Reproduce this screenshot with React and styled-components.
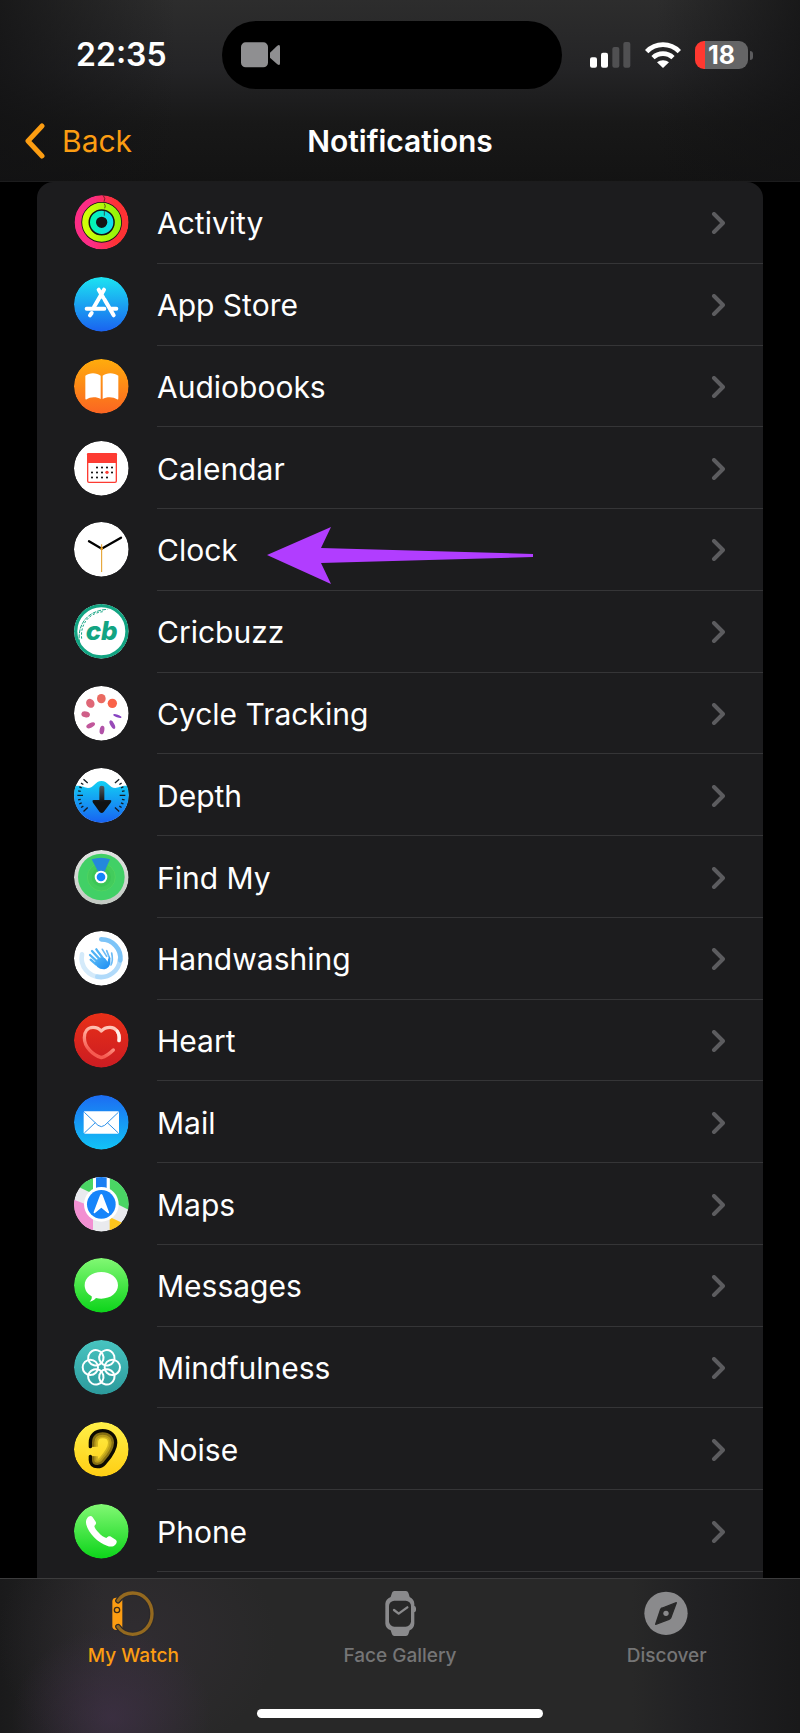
import React from "react";
import styled, { createGlobalStyle } from "styled-components";

const GlobalStyle = createGlobalStyle`
  *, *::before, *::after { box-sizing: border-box; }
  body { margin: 0; background: #000; }
`;

const Screen = styled.div`
  display: flex;
  flex-direction: column;
  min-height: 100vh;
  background: #000;
  color: #fff;
  font-family: Inter, "Liberation Sans", sans-serif;
`;

const Header = styled.header`
  background:
    linear-gradient(90deg, rgba(18, 18, 19, 0.75), transparent 22%, transparent 82%, rgba(18, 18, 19, 0.75)),
    linear-gradient(#2d2d2d, #242426 38%, #181818 68%, #131313);
  border-bottom: 1px solid #1c1c1d;
`;

const StatusBar = styled.div`
  display: grid;
  grid-template-columns: 146fr 340px 190fr;
  align-items: center;
  padding: 21px 47px 0 76px;
`;

const Time = styled.time`
  font-size: 32px;
  line-height: 36px;
  font-weight: 600;
`;

const Island = styled.div`
  height: 68px;
  border-radius: 34px;
  background: #000;
  display: flex;
  align-items: center;
  padding-left: 19px;
`;

const StatusIcons = styled.div`
  display: flex;
  align-items: center;
  justify-content: flex-end;
  gap: 14px;
`;

const Battery = styled.div`
  display: flex;
  align-items: center;
  gap: 2px;
  &::after {
    content: "";
    width: 3px;
    height: 9px;
    border-radius: 0 4px 4px 0;
    background: #5c5c5e;
  }
`;

const BatteryBody = styled.div`
  width: 53px;
  height: 28px;
  border-radius: 9px;
  background: linear-gradient(90deg, #ff3830 10px, #656566 10px);
  font-size: 25px;
  line-height: 28px;
  font-weight: 700;
  text-align: center;
`;

const NavBar = styled.nav`
  display: grid;
  grid-template-columns: 1fr auto 1fr;
  align-items: center;
  height: 92px;
  padding: 12px 24px 0;
`;

const BackButton = styled.button`
  justify-self: start;
  display: flex;
  align-items: center;
  gap: 16px;
  padding: 0;
  border: 0;
  background: none;
  color: #fc9d12;
  font: inherit;
  font-size: 30px;
  line-height: 36px;
`;

const Title = styled.h1`
  margin: 0;
  font-size: 30px;
  line-height: 36px;
  font-weight: 600;
`;

const Main = styled.main`
  flex: 1;
  display: flex;
  padding: 0 37px;
`;

const AppList = styled.ul`
  flex: 1;
  display: flex;
  flex-direction: column;
  margin: 0;
  padding: 0 0 6px;
  list-style: none;
  background: #1c1c1e;
  border-radius: 16px 16px 0 0;
`;

const Item = styled.li`
  flex: 1 0 80px;
  display: flex;
  position: relative;
`;

const RowLink = styled.a`
  flex: 1;
  display: flex;
  align-items: center;
  gap: 28px;
  padding-left: 37px;
  color: #fff;
  text-decoration: none;
`;

const RowBody = styled.span`
  flex: 1;
  align-self: stretch;
  display: flex;
  align-items: center;
  justify-content: space-between;
  padding: 2px 38px 0 0;
  border-bottom: 1px solid #353537;
  font-size: 30px;
  line-height: 36px;
`;

const Pointer = styled.svg`
  position: absolute;
  left: 230px;
  top: 18px;
`;

const TabBar = styled.nav`
  display: flex;
  flex-direction: column;
  align-items: center;
  justify-content: space-between;
  height: 155px;
  padding-bottom: 15px;
  border-top: 1px solid #3c3c3d;
  background:
    radial-gradient(ellipse 100px 90px at 14% 90%, rgba(68, 50, 78, 0.6), transparent),
    radial-gradient(ellipse 140px 120px at 17% 40%, rgba(58, 50, 60, 0.45), transparent),
    linear-gradient(90deg, #1a1a1b, #282828 13%, #282828 79%, #212123 87%, #19191a);
`;

const Tabs = styled.div`
  display: flex;
  align-self: stretch;
`;

const Tab = styled.a`
  flex: 1;
  display: flex;
  flex-direction: column;
  align-items: center;
  gap: 8px;
  padding-top: 12px;
  color: ${(p) => (p.$active ? "#fc9d12" : "#757576")};
  font-size: 19px;
  line-height: 24px;
  font-weight: 500;
  text-decoration: none;
`;

const HomeIndicator = styled.div`
  width: 286px;
  height: 9px;
  border-radius: 5px;
  background: #fff;
`;

/* App icons share a 165 unit square with a round face. */
const AppIcon = ({ id, from, to, children }) => (
  <svg width="55" height="55" viewBox="0 0 165 165" aria-hidden="true">
    <defs>
      <linearGradient id={`${id}-bg`} x1="0" y1="0" x2="0" y2="1">
        <stop offset="0" stopColor={from} />
        <stop offset="1" stopColor={to} />
      </linearGradient>
      <clipPath id={`${id}-clip`}>
        <circle cx="82" cy="82" r="82" />
      </clipPath>
    </defs>
    <g clipPath={`url(#${id}-clip)`}>
      <circle cx="82" cy="82" r="82" fill={`url(#${id}-bg)`} />
      {children}
    </g>
  </svg>
);

const ActivityIcon = () => (
  <AppIcon id="activity" from="#141416" to="#141416">
    <defs>
      <linearGradient id="ring-move"><stop offset="0.3" stopColor="#fb2d85" /><stop offset="0.8" stopColor="#fd3234" /></linearGradient>
      <linearGradient id="ring-ex"><stop offset="0" stopColor="#d2ff08" /><stop offset="1" stopColor="#92f40a" /></linearGradient>
      <linearGradient id="ring-stand"><stop offset="0" stopColor="#04f5b4" /><stop offset="1" stopColor="#10dcf0" /></linearGradient>
    </defs>
    <g fill="none">
      <circle cx="83" cy="82" r="71" stroke="url(#ring-move)" strokeWidth="20" />
      <circle cx="83" cy="82" r="49" stroke="url(#ring-ex)" strokeWidth="19" />
      <circle cx="83" cy="82" r="26" stroke="url(#ring-stand)" strokeWidth="18" />
      <path d="M88 2q8 9 2 18M91 26q5 7 1 14M91 48v14" stroke="#3c1c14" strokeWidth="3" opacity=".7" />
    </g>
  </AppIcon>
);

const AppStoreIcon = () => (
  <AppIcon id="store" from="#1ce4f2" to="#1a62f0">
    <g stroke="#fff" strokeWidth="12" strokeLinecap="round" fill="none">
      <path d="M90 38L60 90M74 38l14 24" />
      <path d="M92 68l27 47" />
      <path d="M38 95h53M112 95h15M53 108l-5 7" />
    </g>
  </AppIcon>
);

const AudiobooksIcon = () => (
  <AppIcon id="books" from="#ffac0c" to="#fb6522">
    <path fill="#fff" d="M34 50C45 40 69 40 80 50V120C70 113 48 112 38 121Q34 123 34 118ZM86 50C97 40 121 40 133 50V118Q133 123 129 121C118 112 96 113 86 120Z" />
  </AppIcon>
);

const calendarDots = [
  [69, 79], [84, 79], [99, 79], [114, 79],
  [54, 94], [69, 94], [84, 94], [114, 94],
  [54, 109], [69, 109], [84, 109], [99, 109],
];

const CalendarIcon = () => (
  <AppIcon id="calendar" from="#fff" to="#fff">
    <rect x="41" y="38" width="86" height="86" rx="4" fill="#fff" stroke="#fd3b32" strokeWidth="4" />
    <path fill="#fd3b32" d="M39 40q0-4 4-4h82q4 0 4 4v26H39z" />
    {calendarDots.map(([x, y]) => (
      <rect key={`${x}-${y}`} x={x - 3} y={y - 2} width="6" height="5" fill="#1a1a1a" />
    ))}
    <circle cx="99" cy="94" r="5" fill="#fd3b32" />
  </AppIcon>
);

const ClockIcon = () => (
  <AppIcon id="clock" from="#fff" to="#fff">
    <g strokeLinecap="round" fill="none">
      <path d="M45 58L83 80L141 47" stroke="#000" strokeWidth="7" />
      <path d="M83 68V149" stroke="#e39a1c" strokeWidth="3" />
    </g>
    <circle cx="83" cy="80" r="4" fill="#e39a1c" />
  </AppIcon>
);

const CricbuzzIcon = () => (
  <AppIcon id="cricbuzz" from="#fff" to="#fff">
    <circle cx="82" cy="82" r="77" fill="none" stroke="#12a482" strokeWidth="10" />
    <g fill="none" stroke="#12a482" strokeWidth="3">
      <path d="M17 118C8 66 36 20 100 16" strokeDasharray="12 3" />
      <path d="M23 104C18 62 44 26 88 23" strokeDasharray="7 5" />
    </g>
    <text x="83" y="107" textAnchor="middle" fontFamily="Inter, sans-serif" fontSize="78" fontWeight="800" fontStyle="italic" fill="#12a482">cb</text>
  </AppIcon>
);

const CycleIcon = () => (
  <AppIcon id="cycle" from="#fff" to="#fff">
    <ellipse cx="82" cy="38" rx="13" ry="14" fill="#ea6a61" />
    <circle cx="115" cy="52" r="14" fill="#fa6349" />
    <ellipse cx="49" cy="52" rx="12" ry="14" fill="#df6777" transform="rotate(-35 49 52)" />
    <ellipse cx="35" cy="85" rx="13" ry="9" fill="#cf5f88" transform="rotate(12 35 85)" />
    <ellipse cx="50" cy="118" rx="14" ry="7" fill="#c1579b" transform="rotate(-25 50 118)" />
    <ellipse cx="84" cy="132" rx="7" ry="13" fill="#b152a8" transform="rotate(10 84 132)" />
    <ellipse cx="115" cy="116" rx="6" ry="14" fill="#984ab8" transform="rotate(-28 115 116)" />
    <ellipse cx="130" cy="90" rx="13" ry="4" fill="#8744c2" transform="rotate(20 130 90)" />
  </AppIcon>
);

const depthTicks = [-42, -31, -21, -11, 0, 11, 21, 31, 42];

const DepthIcon = () => (
  <AppIcon id="depth" from="#fff" to="#fff">
    <defs>
      <linearGradient id="water" x1="0" y1="0" x2="0" y2="1"><stop offset="0" stopColor="#12d0f4" /><stop offset="1" stopColor="#1862f2" /></linearGradient>
      <linearGradient id="dive" x1="0" y1="0" x2="0" y2="1"><stop offset="0" stopColor="#4e5a60" /><stop offset=".6" stopColor="#101214" /></linearGradient>
    </defs>
    <path fill="url(#water)" d="M0 54C22 51 32 60 42 60C60 60 64 39 82 39C102 39 106 60 124 60C134 60 144 51 165 54V165H0Z" />
    {[0, 180].map((side) =>
      depthTicks.map((a, i) => (
        <path key={`${side}-${a}`} d={i % 4 === 0 ? "M137 82h17" : "M145 82h8"} stroke="#141c22" strokeWidth="4" transform={`rotate(${side + a} 82 82)`} />
      )),
    )}
    <path fill="url(#dive)" d="M76 60Q76 53 83 53Q91 53 91 60V96H108Q115 97 110 104L89 132Q83 138 77 132L57 104Q53 97 59 96H76Z" />
  </AppIcon>
);

const FindMyIcon = () => (
  <AppIcon id="findmy" from="#e2e4e2" to="#c2c8c2">
    <circle cx="82" cy="81" r="70" fill="#41d066" />
    <circle cx="82" cy="81" r="42" fill="#43cc5c" stroke="#56d662" strokeWidth="2" />
    <circle cx="82" cy="81" r="29" fill="#3cc656" />
    <path fill="#2488dc" d="M53 28Q82 18 108 28L90 68H74Z" />
    <circle cx="81" cy="81" r="19" fill="#fff" />
    <circle cx="81" cy="81" r="13" fill="#1684fa" />
  </AppIcon>
);

const HandwashingIcon = () => (
  <AppIcon id="wash" from="#fff" to="#fff">
    <defs>
      <linearGradient id="hand" x1="0" y1="0" x2="1" y2="1"><stop offset="0" stopColor="#58b8f6" /><stop offset="1" stopColor="#1a8cf4" /></linearGradient>
    </defs>
    <g fill="none" strokeWidth="14" strokeLinecap="round">
      <path d="M24 70A57 57 0 0 0 81 138" stroke="#d4eafa" />
      <path d="M138 84A57 57 0 0 1 70 137" stroke="#b0dafa" />
      <path d="M82 25A57 57 0 0 1 139 88" stroke="#7cc4f8" />
    </g>
    <g fill="none" stroke="#6cbcf6" strokeWidth="5" strokeLinecap="round">
      <path d="M98 76L85 55M107 82L98 59M111 102Q118 88 113 66" />
    </g>
    <path d="M66 100L50 86M72 94L48 72M80 88L54 60M90 86L67 55" fill="none" stroke="#50b2f5" strokeWidth="7" strokeLinecap="round" />
    <path fill="url(#hand)" d="M61 97L68 86L80 79L93 82L101 92Q102 82 107 76Q111 84 109 97Q105 112 92 115Q78 116 70 108Z" />
  </AppIcon>
);

const HeartIcon = () => (
  <AppIcon id="heart" from="#e83018" to="#cb1c22">
    <defs>
      <linearGradient id="pulse" gradientUnits="userSpaceOnUse" x1="130" y1="60" x2="100" y2="135"><stop offset="0" stopColor="#ffc8ba" /><stop offset=".45" stopColor="#ffa090" /><stop offset="1" stopColor="#f65a50" /></linearGradient>
    </defs>
    <path d="M135 83C138 58 125 43 108 43C97 43 88 47 82 54C76 47 67 43 57 43C41 43 31 56 31 74C31 102 56 126 82 134C96 130 108 121 118 111" fill="none" stroke="url(#pulse)" strokeWidth="10" strokeLinecap="round" strokeLinejoin="round" />
    <path d="M135 83C137 72 134 61 130 55" fill="none" stroke="#fff0ea" strokeWidth="10" strokeLinecap="round" />
  </AppIcon>
);

const MailIcon = () => (
  <AppIcon id="mail" from="#1c6cf2" to="#12c4f6">
    <rect x="29" y="49" width="106" height="67" rx="4" fill="#fff" />
    <path d="M31 52L72 91Q82 99 92 91L133 52M31 114L64 83M133 114L100 83" fill="none" stroke="#2f92ea" strokeWidth="3" />
  </AppIcon>
);

const MapsIcon = () => (
  <AppIcon id="maps" from="#e9eaee" to="#e9eaee">
    <path fill="#4ad564" d="M57 0V50L14 30V0Z" />
    <path fill="#4ad564" d="M107 0H165V99L107 70Z" />
    <path fill="#fff" d="M57 0h50v50H57z" />
    <path fill="#1a7ef2" d="M66 0h32v40H66z" />
    <path fill="#f28fd2" d="M0 68L57 90V165H0Z" />
    <path fill="#fcc61c" d="M107 120L146 138L120 165H107Z" />
    <circle cx="82" cy="82" r="52" fill="#fff" />
    <circle cx="82" cy="82" r="43" fill="#1684fa" />
    <path fill="#fff" d="M78 55Q82 47 86 55L105 105Q106 110 101 108L82 92L63 108Q58 110 59 105Z" />
  </AppIcon>
);

const MessagesIcon = () => (
  <AppIcon id="messages" from="#82f874" to="#0cd41a">
    <path fill="#fff" d="M82 42C110 42 132 59 132 82C132 105 110 122 82 122C76 122 71 121 66 120C60 126 54 131 47 131C53 126 54 121 53 115C40 108 32 96 32 82C32 59 54 42 82 42Z" />
  </AppIcon>
);

const MindfulnessIcon = () => (
  <AppIcon id="mind" from="#48c4c0" to="#2c9a9c">
    {[0, 60, 120, 180, 240, 300].map((a) => (
      <circle key={a} cx="115" cy="82" r="23" fill="none" stroke="#fff" strokeWidth="6" transform={`rotate(${a} 82 82)`} />
    ))}
  </AppIcon>
);

const earPath = "M49 74V62C49 40 64 26 86 26C110 26 125 42 125 62C125 88 104 110 92 124C86 131 78 134 70 134C57 134 49 125 49 114V103";

const NoiseIcon = () => (
  <AppIcon id="noise" from="#fff048" to="#ffce14">
    <clipPath id="ear"><path d={earPath} /></clipPath>
    <g clipPath="url(#ear)" fill="none">
      <path d={earPath} stroke="#d4b820" strokeWidth="46" />
      <path d={earPath} stroke="#b89c1a" strokeWidth="36" />
      <path d={earPath} stroke="#877012" strokeWidth="24" />
    </g>
    <circle cx="47" cy="89" r="13" fill="#ffe030" />
    <path d={earPath} fill="none" stroke="#0c0a02" strokeWidth="10" strokeLinecap="round" />
  </AppIcon>
);

const PhoneIcon = () => (
  <AppIcon id="phone" from="#82f874" to="#0cd41a">
    <path fill="#fff" d="M40 42C45 35 52 34 56 40L65 53C68 58 65 61 61 66C62 76 84 99 97 102C102 97 106 95 111 98L125 107C130 111 129 116 124 122C118 129 108 129 99 125C71 115 44 88 37 62C35 54 36 47 40 42Z" />
  </AppIcon>
);

const VideoIcon = () => (
  <svg width="39" height="26" viewBox="0 0 117 78" fill="#8f8f91" aria-hidden="true">
    <rect x="0" y="1" width="81" height="75" rx="14" />
    <path d="M87 32L108 12Q117 5 117 15V64Q117 73 108 66L87 47Z" />
  </svg>
);

const SignalIcon = () => (
  <svg width="41" height="26" viewBox="0 0 123 78" aria-hidden="true">
    <g fill="#fff">
      <rect x="0" y="46" width="21" height="31" rx="6" />
      <rect x="33" y="32" width="21" height="45" rx="6" />
    </g>
    <g fill="#505052">
      <rect x="67" y="15" width="21" height="62" rx="6" />
      <rect x="100" y="0" width="21" height="77" rx="6" />
    </g>
  </svg>
);

const WifiIcon = () => (
  <svg width="36" height="26" viewBox="0 0 108 78" fill="none" stroke="#fff" strokeWidth="14" aria-hidden="true">
    <path d="M5 29C32 1 76 1 103 29" />
    <path d="M24 47C41 31 67 31 84 47" />
    <path fill="#fff" stroke="none" d="M36 61C46 53 62 53 72 61L54 78Z" />
  </svg>
);

const BackChevron = () => (
  <svg width="22" height="36" viewBox="0 0 22 36" fill="none" stroke="currentColor" strokeWidth="5" strokeLinecap="round" strokeLinejoin="round" aria-hidden="true">
    <path d="M18 3L4 18L18 33" />
  </svg>
);

const RowChevron = () => (
  <svg width="14" height="22" viewBox="0 0 14 22" fill="none" stroke="#5c5c5f" strokeWidth="4" strokeLinecap="round" strokeLinejoin="round" aria-hidden="true">
    <path d="M3 2L12 11L3 20" />
  </svg>
);

const MyWatchIcon = () => (
  <svg width="45" height="45" viewBox="0 0 135 135" fill="none" aria-hidden="true">
    <path fill="#fc9d12" d="M4 30Q5 20 16 20H34V117H16Q5 116 4 107Z" />
    <path d="M21 29C32 13 47 6 65 6C97 6 123 32 123 68C123 103 97 130 65 130C47 130 32 123 21 107" stroke="#2c292b" strokeWidth="17" strokeLinecap="round" />
    <path d="M21 29C32 13 47 6 65 6C97 6 123 32 123 68C123 103 97 130 65 130C47 130 32 123 21 107" stroke="#94691f" strokeWidth="10" strokeLinecap="round" />
    <circle cx="18" cy="57" r="8" stroke="#3a2a18" strokeWidth="4" />
  </svg>
);

const FaceGalleryIcon = () => (
  <svg width="45" height="45" viewBox="0 0 135 135" aria-hidden="true">
    <path fill="#8a8a8c" d="M42 5Q44 0 49 0H84Q89 0 91 5L95 18Q108 24 109 38V44Q114 46 114 52V58Q114 63 109 64V98Q108 112 95 118L91 130Q89 135 84 135H49Q44 135 42 130L38 118Q23 112 22 98V38Q23 24 38 18Z" />
    <rect x="33" y="29" width="66" height="78" rx="16" fill="#282828" />
    <path d="M48 57L62 68L88 49" fill="none" stroke="#8a8a8c" strokeWidth="7" strokeLinecap="round" strokeLinejoin="round" />
  </svg>
);

const DiscoverIcon = () => (
  <svg width="45" height="45" viewBox="0 0 135 135" aria-hidden="true">
    <circle cx="66" cy="67" r="65" fill="#8a8a8c" />
    <path d="M97 35L80 81Q78 84 75 85L35 100L50 55Q52 52 55 51Z" fill="#282828" stroke="#282828" strokeWidth="4" strokeLinejoin="round" />
    <circle cx="66" cy="67" r="8" fill="#8a8a8c" />
  </svg>
);

const PurpleArrow = () => (
  <Pointer width="266" height="57" viewBox="0 0 266 57" aria-hidden="true">
    <path fill="#b13dff" d="M0 28L64 0L54 21L266 27V30L54 36L64 57Z" />
  </Pointer>
);

const apps = [
  ["Activity", ActivityIcon],
  ["App Store", AppStoreIcon],
  ["Audiobooks", AudiobooksIcon],
  ["Calendar", CalendarIcon],
  ["Clock", ClockIcon, true],
  ["Cricbuzz", CricbuzzIcon],
  ["Cycle Tracking", CycleIcon],
  ["Depth", DepthIcon],
  ["Find My", FindMyIcon],
  ["Handwashing", HandwashingIcon],
  ["Heart", HeartIcon],
  ["Mail", MailIcon],
  ["Maps", MapsIcon],
  ["Messages", MessagesIcon],
  ["Mindfulness", MindfulnessIcon],
  ["Noise", NoiseIcon],
  ["Phone", PhoneIcon],
];

const tabs = [
  ["My Watch", MyWatchIcon],
  ["Face Gallery", FaceGalleryIcon],
  ["Discover", DiscoverIcon],
];

export default function App() {
  return (
    <Screen>
      <GlobalStyle />
      <Header>
        <StatusBar>
          <Time>22:35</Time>
          <Island><VideoIcon /></Island>
          <StatusIcons>
            <SignalIcon />
            <WifiIcon />
            <Battery><BatteryBody>18</BatteryBody></Battery>
          </StatusIcons>
        </StatusBar>
        <NavBar>
          <BackButton type="button"><BackChevron />Back</BackButton>
          <Title>Notifications</Title>
        </NavBar>
      </Header>
      <Main>
        <AppList>
          {apps.map(([name, Icon, marked]) => (
            <Item key={name}>
              <RowLink href="#">
                <Icon />
                <RowBody>{name}<RowChevron /></RowBody>
              </RowLink>
              {marked && <PurpleArrow />}
            </Item>
          ))}
        </AppList>
      </Main>
      <TabBar>
        <Tabs>
          {tabs.map(([name, Icon], i) => (
            <Tab key={name} href="#" $active={i === 0} aria-current={i === 0 ? "page" : undefined}>
              <Icon />
              {name}
            </Tab>
          ))}
        </Tabs>
        <HomeIndicator />
      </TabBar>
    </Screen>
  );
}
